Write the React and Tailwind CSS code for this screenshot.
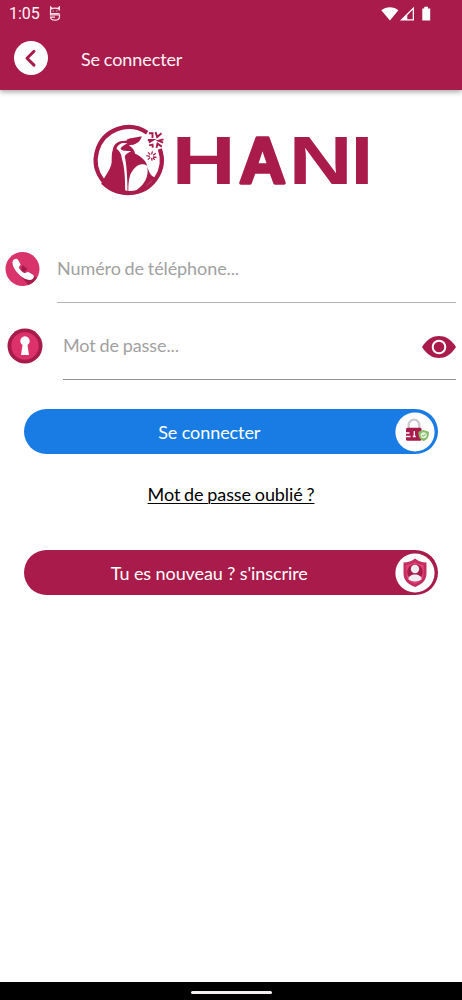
import React from "react";

function StatusBar() {
  return (
    <div className="flex h-7 items-center pl-[9px] pr-[31px]">
      <span className="font-[Roboto,sans-serif] text-[16px] leading-none tracking-normal">1:05</span>
      <svg className="ml-[9px]" width="12" height="16" viewBox="0 0 12 16" fill="none" stroke="#fbe3ec" strokeWidth="1.2">
        <path d="M10.500 7.500H1.500V4.500C1.500 3 3 2.200 6 2.200s4.500.8 4.500 2.300M1.600 3.500V1l1.600 1.500M10.400 3.500V1L8.800 2.500M1.500 7v1.800h9v1.700c0 2.200-2 3.700-4.500 3.700s-4.300-1.300-4.500-3h4.500" />
        <path d="M3.700 5h1M7.300 5h1" />
      </svg>
      <svg className="ml-auto" width="50" height="16" viewBox="0 0 50 16" fill="#fff">
        <path d="M.3 4.300C5 .2 12.700.2 17.400 4.300L8.900 14.500z" />
        <path fillRule="evenodd" d="M33 .7V14.600H19zM31.700 3.800 26.300 9.200V13.300H31.700z" />
        <path d="M41.300 2.400h2V.8h3.700v1.600h2.200v12.200h-7.900z" />
      </svg>
    </div>
  );
}

function Brand() {
  return (
    <svg width="278" height="74" viewBox="92 123 278 74" fill="#a91b4a" role="img" aria-label="HANI" className="overflow-visible">
      <g transform="translate(84.500 115) scale(.33333)">
        <path d="M188 53A99 99 0 1 0 226 102" fill="none" stroke="#a91b4a" strokeWidth="12.500" />
        <path d="M50 206C60 185 78 165 81 145C83 128 80 118 85 104C88 84 102 76 126 77C128 70 140 70 172 64C166 84 152 90 133 91C145 98 150 108 152 116C170 124 185 138 188 152C164 138 146 160 137 180C131 198 131 220 132 238C95 240 70 226 50 206z" />
        <path d="M96 101C98 92 106 86 114 84L129 85C120 90 111 94 108 101C112 108 124 107 140 108C132 114 122 116 121 126C126 146 129 190 129 228L122 226C122 190 120 160 114 138C110 122 112 114 96 101z" fill="#fff" />
        <path d="M187 150C195 180 185 212 136 238L160 236L215 185C202 190 193 172 187 150z" />
        <g fill="none" stroke="#a91b4a" strokeWidth="5.800">
          <path d="M193 55h11v14M213 51l5 15 13-11M190 75h15l-12 7M237 73l-15 4 14 6M194 91l10-2 1 9M216 98l3-12 13 9" />
        </g>
        <g fill="none" stroke="#a91b4a" strokeWidth="3.800">
          <path d="m191 112 6 7M204 109l-3 9M214 115l-8 6M186 122l10 2M216 127l-10-1M190 134l7-7M203 137l-2-8M211 134l-6-5" />
        </g>
      </g>
      <g fontFamily="'Liberation Sans', sans-serif" fontWeight="700" fontSize="69">
        <text transform="translate(171.600 184) scale(1.290 1)">H</text>
        <text transform="translate(239.300 182.700) scale(.935 .95)" stroke="#a91b4a" strokeWidth="3.600" strokeLinejoin="round">A</text>
        <text transform="translate(288.600 184) scale(1.290 1)">N</text>
        <text transform="translate(350.500 184) scale(1.190 1)">I</text>
      </g>
    </svg>
  );
}

function PhoneBadge() {
  return (
    <svg width="35" height="34" viewBox="-.5 0 35 34" className="shrink-0">
      <circle cx="17" cy="17" r="17" fill="#d8346b" />
      <path d="M17 13 22 17 19 20 31.500 25.500A17 17 0 0 1 23 33L14 23z" fill="#a61b4a" />
      <path d="M7.500 8.500c1-1.600 3.800-2.500 5-.8l2.200 3.800c1 1.800-1 2.500-1.400 3.800-.2 1.300 4.300 5.500 5.700 5.700 1.500.2 2.500-1.400 4.200-.7l4.300 2.500c1.500 1 1.200 3.300-.4 4.300-7 4.800-23.200-11.800-19.600-18.600z" fill="#fff" />
    </svg>
  );
}

function KeyholeBadge() {
  return (
    <svg width="36" height="36" viewBox="0 0 36 36" className="shrink-0">
      <circle cx="18" cy="18" r="17.500" fill="#a61b4a" />
      <circle cx="18" cy="18" r="13.700" fill="#dc316b" />
      <path d="M15.500 17a4.700 4.700 0 1 1 5 0l1.500 10h-8z" fill="#fff" />
    </svg>
  );
}

function EyeIcon() {
  return (
    <svg width="34" height="24" viewBox="0 0 34 24" className="mt-[2px]">
      <path d="M0 12C5 4 11 1 17 1s12 3 17 11c-5 8-11 11-17 11S5 20 0 12z" fill="#a91b4a" />
      <circle cx="17" cy="12" r="6.300" fill="none" stroke="#fff" strokeWidth="2" />
    </svg>
  );
}

function LockIcon() {
  return (
    <svg width="40" height="40" viewBox="0 0 40 40">
      <circle cx="20" cy="20" r="19.600" fill="#fff" />
      <path d="M13.700 17v-4a5.300 5.300 0 0 1 10.600 0v4" fill="none" stroke="#c9c9ce" strokeWidth="2.300" />
      <rect x="11" y="15.800" width="15.500" height="13" rx="1.500" fill="#a91b4a" />
      <path d="M19.300 19v6M17.800 24.500h3M10.500 21h4M10.500 24.500h5" stroke="#fff" strokeWidth="1.300" />
      <path d="m28.500 18 5.300 1.800c.4 4.800-1.200 7.800-5.300 9.300-3.700-1.500-5.300-4.500-5-9.300z" fill="#85be64" />
      <circle cx="28.700" cy="23.300" r="3" fill="#e6f3de" />
      <path d="m27.200 23.300 1.100 1.100 2-2.200" fill="none" stroke="#62a744" strokeWidth="1" />
    </svg>
  );
}

function MemberIcon() {
  return (
    <svg width="40" height="40" viewBox="0 0 40 40">
      <circle cx="20" cy="20" r="19.600" fill="#fff" />
      <path d="M20 5.500c3 2.500 7 4 11.500 4v11c0 7-5 11-11.500 13.500C13.500 31.500 8.500 27.500 8.500 20.500v-11C13 9.500 17 8 20 5.500z" fill="#c52d60" />
      <path d="M20 9c2.500 1.700 5.500 2.800 8.700 3v8.300c0 5.200-3.500 8.500-8.700 10.700-5.200-2.200-8.700-5.500-8.700-10.700V12c3.200-.2 6.200-1.300 8.700-3z" fill="#e04577" />
      <circle cx="20" cy="19" r="7.800" fill="#a51b49" />
      <circle cx="20" cy="16" r="4.200" fill="#efedf2" />
      <path d="M13.500 26.500c-.5-3 3-5 6.500-5s7 2 6.500 5c-3.500 2.500-9.500 2.500-13 0z" fill="#efedf2" />
    </svg>
  );
}

export default function App() {
  return (
    <main className="flex h-[1000px] w-[462px] flex-col overflow-hidden bg-white font-[Lato,sans-serif] text-[18px] leading-6 tracking-[-0.09px] text-black [word-spacing:-0.7px]">
      <header className="z-10 h-[90px] shrink-0 bg-[#a91b4a] text-[#fff3f7] shadow-[0_2px_5px_rgba(0,0,0,0.35)]">
        <StatusBar />
        <div className="flex items-center pl-[14px] pt-[13px]">
          <button aria-label="Retour" className="flex size-[34px] items-center justify-center rounded-full bg-white">
            <svg width="34" height="34" viewBox="0 0 34 34" fill="none" stroke="#a91b4a" strokeWidth="3" strokeLinecap="round" strokeLinejoin="round">
              <path d="m20 10.300-7 6.900 7 6.900" />
            </svg>
          </button>
          <h1 className="ml-[33px] pt-px">Se connecter</h1>
        </div>
      </header>

      <div className="flex justify-center pt-[33px]">
        <Brand />
      </div>

      <form className="flex flex-col">
        <label className="mt-[55px] flex h-[51px] pl-[5px] pr-[6px]">
          <PhoneBadge />
          <span className="ml-[17px] h-[51px] flex-1 border-b border-[#b4b4b4] pt-[4px] text-[#a1a1a1]">Numéro de téléphone...</span>
        </label>
        <label className="mt-[25px] flex h-[52px] pl-[7px] pr-[6px]">
          <KeyholeBadge />
          <span className="ml-[20px] flex h-[52px] flex-1 justify-between border-b border-[#919191] pt-[5px] text-[#a1a1a1]">
            Mot de passe...
            <EyeIcon />
          </span>
        </label>
        <button type="button" className="ml-[23.5px] mr-[24px] mt-[29px] flex h-[45px] items-center rounded-full bg-[#187ce4] pr-[3px] text-white">
          <span className="flex-1 pt-px">Se connecter</span>
          <LockIcon />
        </button>
        <a className="mt-[28px] self-center underline decoration-1 underline-offset-[2px]">Mot de passe oublié ?</a>
        <button type="button" className="ml-[23.5px] mr-[24px] mt-[44px] flex h-[45px] items-center rounded-full bg-[#a91b4a] pr-[3px] text-white">
          <span className="flex-1">Tu es nouveau ? s'inscrire</span>
          <MemberIcon />
        </button>
      </form>

      <footer className="mt-auto flex h-[18px] justify-center bg-black pt-[9px]">
        <span className="h-[2.5px] w-[81px] rounded-full bg-[#f3eff0]" />
      </footer>
    </main>
  );
}
